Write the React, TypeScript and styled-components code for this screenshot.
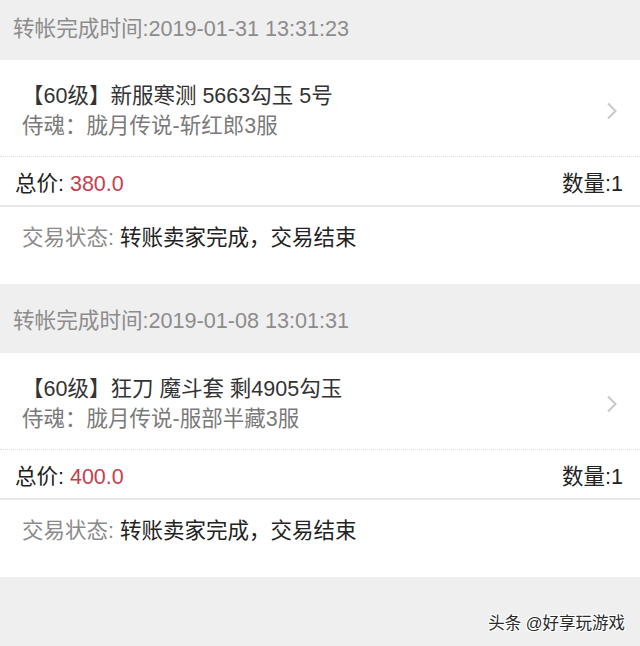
import React from "react";
import styled, { createGlobalStyle } from "styled-components";

const GlobalStyle = createGlobalStyle`
  html, body {
    margin: 0;
    padding: 0;
    background: #efeff0;
  }
  body {
    font-family: "Liberation Sans", "Noto Sans CJK SC", sans-serif;
  }
`;

const Page = styled.main`
  width: 640px;
  min-height: 646px;
  background: #efeff0;
  display: flex;
  flex-direction: column;
`;

const TimeHeader = styled.div<{ $cropped?: boolean }>`
  height: ${(p) => (p.$cropped ? "60px" : "69px")};
  padding: 0 13px ${(p) => (p.$cropped ? "8px" : "0")};
  box-sizing: border-box;
  display: flex;
  align-items: center;
  font-size: 21.6px;
  color: #8c8c8c;
`;

const Order = styled.section`
  background: #fff;
`;

const ItemRow = styled.div`
  display: flex;
  align-items: center;
  justify-content: space-between;
  padding: 21px 20px 15px 22px;
  border-bottom: 1px dotted #dcdcdc;
`;

const ItemText = styled.div`
  display: flex;
  flex-direction: column;
  font-size: 21.5px;
  line-height: 30px;
`;

const Title = styled.span`
  color: #333;
`;

const Sub = styled.span`
  color: #7a7a7a;
`;

const PriceRow = styled.div`
  height: 48px;
  display: flex;
  align-items: center;
  justify-content: space-between;
  padding: 0 17px 0 15px;
  border-bottom: 2px solid #e8e8e8;
  font-size: 21.5px;
  color: #222;
`;

const Money = styled.span`
  color: #c6404c;
`;

const StatusRow = styled.div`
  padding: 16px 22px 31px;
  font-size: 21.5px;
  line-height: 30px;
  color: #222;
`;

const Muted = styled.span`
  color: #8a8a8a;
`;

const Footer = styled.div`
  flex: 1;
  display: flex;
  align-items: flex-end;
  justify-content: flex-end;
  padding: 0 15px 12px;
  font-size: 16.5px;
  color: #2a2a2a;
  text-shadow: 1px 1px 0 #fff, -1px -1px 0 #fff, 1px -1px 0 #fff, -1px 1px 0 #fff;
`;

const Chevron = () => (
  <svg width="16" height="22" viewBox="0 0 16 22">
    <path d="M4 3.5 L11.5 11 L4 18.5" fill="none" stroke="#c8c8cc" strokeWidth="2" />
  </svg>
);

type OrderData = {
  time: string;
  title: string;
  server: string;
  price: string;
};

const orders: OrderData[] = [
  {
    time: "2019-01-31 13:31:23",
    title: "【60级】新服寒测 5663勾玉 5号",
    server: "胧月传说-斩红郎3服",
    price: "380.0",
  },
  {
    time: "2019-01-08 13:01:31",
    title: "【60级】狂刀 魔斗套 剩4905勾玉",
    server: "胧月传说-服部半藏3服",
    price: "400.0",
  },
];

export default function App() {
  return (
    <>
      <GlobalStyle />
      <Page>
        {orders.map((o, i) => (
          <React.Fragment key={o.time}>
            <TimeHeader $cropped={i === 0}>转帐完成时间:{o.time}</TimeHeader>
            <Order>
              <ItemRow>
                <ItemText>
                  <Title>{o.title}</Title>
                  <Sub>侍魂：{o.server}</Sub>
                </ItemText>
                <Chevron />
              </ItemRow>
              <PriceRow>
                <span>
                  总价: <Money>{o.price}</Money>
                </span>
                <span>数量:1</span>
              </PriceRow>
              <StatusRow>
                <Muted>交易状态: </Muted>转账卖家完成，交易结束
              </StatusRow>
            </Order>
          </React.Fragment>
        ))}
        <Footer>头条 @好享玩游戏</Footer>
      </Page>
    </>
  );
}
